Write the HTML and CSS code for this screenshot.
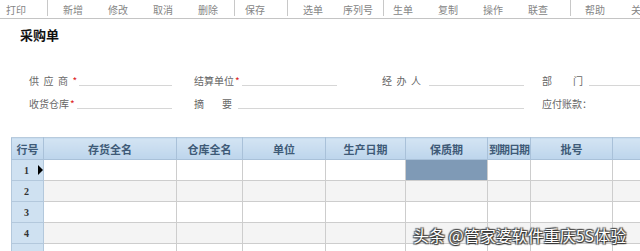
FILE: index.html
```html
<!DOCTYPE html>
<html lang="zh-CN">
<head>
<meta charset="UTF-8">
<meta name="viewport" content="width=device-width, initial-scale=1.0">
<title>采购单</title>
<link rel="stylesheet" href="styles.css">
</head>
<body>
<div class="toolbar">
    <div class="tb-group g1"><span>打印</span></div>
    <div class="tb-group g2"><span>新增</span><span>修改</span><span>取消</span><span>删除</span></div>
    <div class="tb-group g3"><span>保存</span></div>
    <div class="tb-group g4"><span>选单</span><span>序列号</span></div>
    <div class="tb-group g5"><span>生单</span><span>复制</span><span>操作</span><span>联查</span></div>
    <div class="tb-group g6"><span>帮助</span><span>关</span></div>
</div>

<h2 class="page-title">采购单</h2>

<div class="bill-head">
    <div class="field f1"><label class="spaced">供应商</label><i>*</i><span class="line"></span></div>
    <div class="field f2"><label>结算单位</label><i>*</i><span class="line"></span></div>
    <div class="field f3"><label class="spaced">经办人</label><span class="line"></span></div>
    <div class="field f4"><label class="wide">部门</label><span class="line"></span></div>
    <div class="field f1"><label>收货仓库</label><i>*</i><span class="line"></span></div>
    <div class="field f3 span2"><label class="wide2">摘要</label><span class="line"></span></div>
    <div class="field f4"><label>应付账款：</label></div>
</div>

<div class="grid-wrap">
    <table class="grid">
        <colgroup>
            <col style="width:32px">
            <col style="width:133px">
            <col style="width:66px">
            <col style="width:83px">
            <col style="width:80px">
            <col style="width:82px">
            <col style="width:43px">
            <col style="width:82px">
            <col style="width:60px">
        </colgroup>
        <thead>
            <tr>
                <th>行号</th><th>存货全名</th><th>仓库全名</th><th>单位</th><th>生产日期</th><th>保质期</th><th class="tight">到期日期</th><th>批号</th><th></th>
            </tr>
        </thead>
        <tbody>
            <tr>
                <td class="rownum">1<span class="row-mark current"></span></td>
                <td></td><td></td><td></td><td></td><td class="selected"></td><td></td><td></td><td></td>
            </tr>
            <tr class="alt">
                <td class="rownum">2<span class="row-mark"></span></td>
                <td></td><td></td><td></td><td></td><td></td><td></td><td></td><td></td>
            </tr>
            <tr>
                <td class="rownum">3<span class="row-mark"></span></td>
                <td></td><td></td><td></td><td></td><td></td><td></td><td></td><td></td>
            </tr>
            <tr class="alt">
                <td class="rownum">4<span class="row-mark"></span></td>
                <td></td><td></td><td></td><td></td><td></td><td></td><td></td><td></td>
            </tr>
            <tr>
                <td class="rownum"></td>
                <td></td><td></td><td></td><td></td><td></td><td></td><td></td><td></td>
            </tr>
        </tbody>
    </table>
    <div class="watermark">头条 @管家婆软件重庆5S体验</div>
</div>
</body>
</html>
```

FILE: styles.css
```css
body {
    margin: 0;
    width: 640px;
    height: 251px;
    overflow: hidden;
    background: #fff;
    font-family: "Noto Sans CJK SC", "Liberation Sans", sans-serif;
    color: #333;
}

/* toolbar */
.toolbar {
    display: flex;
    height: 18px;
    border-bottom: 1px solid #c4c4c4;
    font-size: 10px;
    line-height: 19px;
    color: #858585;
    white-space: nowrap;
}
.tb-group {
    display: flex;
    gap: 25px;
    border-right: 1px solid #c8c8c8;
    height: 16px;
}
.g1 { padding: 0 21px 0 6px; }
.g2 { padding: 0 16px 0 15px; }
.g3 { padding: 0 22px 0 10px; }
.g4 { padding: 0 10px 0 15px; gap: 20px; }
.g5 { padding: 0 22px 0 9px; gap: 25px; }
.g6 { padding: 0 0 0 14px; border-right: none; gap: 26px; }

.page-title {
    margin: 8px 0 0 20px;
    font-size: 13px;
    line-height: 16px;
    font-weight: bold;
    color: #111;
}

/* bill header fields */
.bill-head {
    display: grid;
    grid-template-columns: 165px 188px 160px 1fr;
    grid-auto-rows: 23px;
    margin-top: 26px;
    padding-left: 29px;
    font-size: 10px;
    color: #666;
    overflow: hidden;
}
.field {
    display: flex;
    align-items: center;
    white-space: nowrap;
}
.field i {
    font-style: normal;
    color: #d22;
    font-size: 10px;
    margin-left: 1px;
}
.field .line {
    flex: 1;
    align-self: center;
    height: 9px;
    border-bottom: 1px solid #d6d6d6;
    margin-left: 2px;
}
.f1 .line { margin-right: 22px; }
.f2 .line { margin-right: 45px; }
.f3 .line { margin-right: 18px; margin-left: 4px; }
.f4 .line { margin-left: 6px; }
.span2 { grid-column: span 2; }
.spaced { letter-spacing: 4.5px; margin-right: -1px; }
.wide { letter-spacing: 21px; margin-right: -21px; }
.wide2 { letter-spacing: 18px; margin-right: -18px; }
.f3.span2 .line { margin-left: 6px; }

/* grid */
.grid-wrap {
    position: relative;
    margin: 22px 0 0 11px;
    height: 114px;
    overflow: hidden;
}
.grid {
    border-collapse: collapse;
    table-layout: fixed;
    width: 661px;
}
.grid th {
    height: 21px;
    padding: 0;
    background: linear-gradient(#d3e4f3, #bdd5ec);
    border: 1px solid #a9c1d9;
    border-top-color: #b8cbdd;
    font-size: 11px;
    font-weight: bold;
    color: #3e5a77;
    text-align: center;
    white-space: nowrap;
    overflow: hidden;
}
.grid th.tight { letter-spacing: -1px; }
.grid td {
    height: 20px;
    padding: 0;
    border: 1px solid #cdcdcd;
    background: #fff;
}
.grid tr.alt td { background: #f4f4f4; }
.grid td.rownum {
    background: #cfe1f1;
    border-color: #b3c8dc;
    text-align: right;
    font-family: "Liberation Serif", serif;
    font-size: 10px;
    font-weight: bold;
    color: #333;
}
.grid tr.alt td.rownum { background: #cfe1f1; }
.row-mark {
    display: inline-block;
    width: 0;
    height: 0;
    margin-left: 9px;
    vertical-align: -1px;
    border-top: 5px solid transparent;
    border-bottom: 5px solid transparent;
    border-left: 5px solid transparent;
}
.row-mark.current { border-left-color: #000; }
.grid td.selected { background: #7f9ab6; }

.watermark {
    position: absolute;
    left: 402px;
    top: 88px;
    font-size: 16px;
    line-height: 20px;
    color: #fff;
    white-space: nowrap;
    text-shadow: 0 0 1px #222, 1px 1px 1px #333, -1px -1px 1px #555, 1px -1px 1px #555, -1px 1px 1px #555;
}
```
